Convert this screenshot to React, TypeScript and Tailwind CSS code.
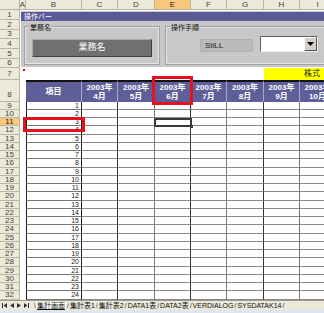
import React from 'react';

const cols = [
  { k: 'A', w: 'w-[6px]' },
  { k: 'B', w: 'w-[56px]' },
  { k: 'C', w: 'w-[36px]' },
  { k: 'D', w: 'w-[37px]' },
  { k: 'E', w: 'w-[36px]' },
  { k: 'F', w: 'w-[36px]' },
  { k: 'G', w: 'w-[37px]' },
  { k: 'H', w: 'w-[36px]' },
  { k: 'I', w: 'w-[36px]' },
];

const months = ['4月', '5月', '6月', '7月', '8月', '9月', '10月'];
const dataCols = ['w-[36px]', 'w-[37px]', 'w-[36px]', 'w-[36px]', 'w-[37px]', 'w-[36px]', 'w-[36px]'];

const topRows = [
  { n: 1, h: 'h-[10px]' },
  { n: 2, h: 'h-[10px]' },
  { n: 3, h: 'h-[9px]' },
  { n: 4, h: 'h-[10px]' },
  { n: 5, h: 'h-[10px]' },
  { n: 6, h: 'h-[9px]' },
  { n: 7, h: 'h-[12px]' },
  { n: 8, h: 'h-[22px]' },
];

const dataRows = Array.from({ length: 25 }, (_, i) => ({
  n: i + 9,
  v: i + 1,
  h: i % 4 === 3 ? 'h-[9px]' : 'h-[8px]',
}));

const tabs = ['集計表1', '集計表2', 'DATA1表', 'DATA2表', 'VERDIALOG', 'SYSDATAK14'];

function RowHead({ n, h }: { n: number; h: string }) {
  const sel = n === 11;
  return (
    <div
      className={`${h} shrink-0 flex ${n === 8 ? 'items-end' : 'items-center'} justify-center border-b border-r border-[#b9b6a6] text-[8px] leading-none ${
        sel ? 'bg-[#f8c77c] text-[#222]' : 'bg-[#ece9d8] text-[#444]'
      }`}
    >
      <span className={n === 8 ? 'pb-[2px]' : ''}>{n}</span>
    </div>
  );
}

export default function App() {
  return (
    <div
      className="relative w-[324px] h-[313px] overflow-hidden bg-white flex flex-col"
      style={{ fontFamily: '"Liberation Sans", "Noto Sans CJK JP", sans-serif' }}
    >
      {/* column letters */}
      <div className="flex h-[10px] shrink-0">
        <div className="w-[20px] shrink-0 bg-[#ece9d8] border-r border-b border-[#b9b6a6]" />
        {cols.map(c => (
          <div
            key={c.k}
            className={`${c.w} shrink-0 flex items-center justify-center border-r border-b border-[#b9b6a6] text-[8px] leading-none ${
              c.k === 'E' ? 'bg-[#f8c77c] text-[#222]' : 'bg-[#ece9d8] text-[#444]'
            }`}
          >
            {c.k}
          </div>
        ))}
      </div>

      <div className="flex flex-1 min-h-0 overflow-hidden">
        {/* row numbers */}
        <div className="w-[20px] shrink-0 flex flex-col">
          {topRows.map(r => (
            <RowHead key={r.n} n={r.n} h={r.h} />
          ))}
          {dataRows.map(r => (
            <RowHead key={r.n} n={r.n} h={r.h} />
          ))}
        </div>

        {/* sheet */}
        <div className="flex-1 flex flex-col min-w-0">
          {/* control panel rows 1-6 */}
          <div className="h-[58px] shrink-0 pl-px pt-px pb-px">
            <div className="h-full bg-[#c8c8c8] flex flex-col">
              <div className="h-[9px] mt-px bg-[#5a5a96] text-white text-[7px] leading-[9px] pl-[3px]">操作バー</div>
              <div className="flex flex-1 pt-[3px]">
                <div className="relative w-[134px] ml-[4px] mt-[3px] mb-[3px] border border-[#e6e6e6] outline outline-1 outline-[#a0a0a0]">
                  <span className="absolute -top-[5px] left-[3px] bg-[#c8c8c8] px-px text-[7px] leading-[9px] text-[#111]">業務名</span>
                  <div className="mx-[6px] mt-[11px] h-[18px] bg-[#707070] border border-t-[#a8a8a8] border-l-[#a8a8a8] border-b-[#404040] border-r-[#404040] flex items-center justify-center text-white text-[9px]">
                    業務名
                  </div>
                </div>
                <div className="relative flex-1 ml-[7px] mt-[3px] mb-[3px] border border-r-0 border-[#e6e6e6] outline outline-1 outline-[#a0a0a0]">
                  <span className="absolute -top-[5px] left-[3px] bg-[#c8c8c8] px-px text-[7px] leading-[9px] text-[#111]">操作手順</span>
                  <div className="flex items-start mt-[8px]">
                    <div className="ml-[33px] mt-[3px] w-[53px] h-[13px] bg-[#bababa] border border-[#b0b0b0] text-[8px] leading-[11px] pl-[4px] text-[#222]">StiLL</div>
                    <div className="ml-[7px] w-[58px] h-[16px] bg-white border border-t-[#606060] border-l-[#606060] border-b-[#f0f0f0] border-r-[#f0f0f0] flex justify-end">
                      <div className="w-[13px] h-full bg-[#d4d0c8] border border-t-white border-l-white border-b-[#505050] border-r-[#505050] flex items-center justify-center">
                        <svg width="7" height="4" viewBox="0 0 7 4"><path d="M0 0H7L3.5 4Z" fill="#000" /></svg>
                      </div>
                    </div>
                  </div>
                </div>
              </div>
            </div>
          </div>

          {/* row 7 */}
          <div className="h-[12px] shrink-0 flex">
            <div className="w-[244px] relative">
              <span className="absolute left-[3px] top-[1px] w-[2px] h-[2px] bg-[#e00000]" />
            </div>
            <div className="flex-1 bg-[#ffff00] text-[8px] leading-[12px] pl-[40px] text-[#222]">株式</div>
          </div>

          {/* row 8 header */}
          <div className="h-[22px] shrink-0 flex">
            <div className="w-[6px] shrink-0" />
            <div className="w-[56px] shrink-0 bg-[#5e5e99] border-t-2 border-[#111] border-r border-r-[#a8a8c4] flex items-center justify-center text-white text-[8px] font-bold">
              項目
            </div>
            {months.map((m, i) => (
              <div
                key={m}
                className={`${dataCols[i]} shrink-0 bg-[#5e5e99] border-t-2 border-[#111] border-r border-r-[#a8a8c4] flex flex-col items-center justify-center text-white text-[8px] leading-[9px] font-bold`}
              >
                <span>2003年</span>
                <span>{m}</span>
              </div>
            ))}
          </div>

          {/* data rows */}
          {dataRows.map(r => (
            <div key={r.n} className={`${r.h} shrink-0 flex`}>
              <div className="w-[6px] shrink-0" />
              <div className="w-[56px] shrink-0 border-l border-[#222] border-r border-r-[#222] border-b border-b-[#777] text-[7px] leading-[7px] text-right pr-[2px] text-[#222]">
                {r.v}
              </div>
              {dataCols.map((w, i) => (
                <div
                  key={i}
                  className={`${w} shrink-0 border-r border-b ${i % 2 === 0 ? 'border-r-[#333]' : 'border-r-[#777]'} border-b-[#8a8a8a]`}
                />
              ))}
            </div>
          ))}
        </div>
      </div>

      {/* sheet tabs */}
      <div className="h-[10px] shrink-0 bg-[#ece9d8] border-t border-[#9c9a8c] flex items-center text-[7px] leading-none text-[#111]">
        <div className="w-[34px] shrink-0 flex items-center gap-[3px] pl-[2px]">
          <svg width="5" height="5" viewBox="0 0 5 5"><path d="M0 0H1V5H0Z M5 0V5L1.5 2.5Z" fill="#333" /></svg>
          <svg width="4" height="5" viewBox="0 0 4 5"><path d="M4 0V5L0 2.5Z" fill="#333" /></svg>
          <svg width="4" height="5" viewBox="0 0 4 5"><path d="M0 0V5L4 2.5Z" fill="#333" /></svg>
          <svg width="5" height="5" viewBox="0 0 5 5"><path d="M0 0V5L3.5 2.5Z M4 0H5V5H4Z" fill="#333" /></svg>
        </div>
        <span className="text-[#333]">\</span>
        <span className="bg-white px-[1px] underline">集計画面</span>
        {tabs.map(t => (
          <React.Fragment key={t}>
            <span className="text-[#333] px-[1px]">/</span>
            <span>{t}</span>
          </React.Fragment>
        ))}
        <span className="text-[#333] px-[1px]">/</span>
      </div>
      <div className="h-[3px] shrink-0 bg-[#dfe6f2]" />

      {/* annotations over the sheet */}
      <div className="absolute left-[152px] top-[76px] w-[41px] h-[29px] border-[3px] border-[#e8101a]" />
      <div className="absolute left-[23px] top-[117px] w-[62px] h-[15px] border-[3px] border-[#e8101a]" />
      <div className="absolute left-[154px] top-[118px] w-[38px] h-[9px] border-2 border-[#3a3a3a]" />
      <div className="absolute left-[190px] top-[125px] w-[3px] h-[3px] bg-[#3a3a3a]" />
    </div>
  );
}
